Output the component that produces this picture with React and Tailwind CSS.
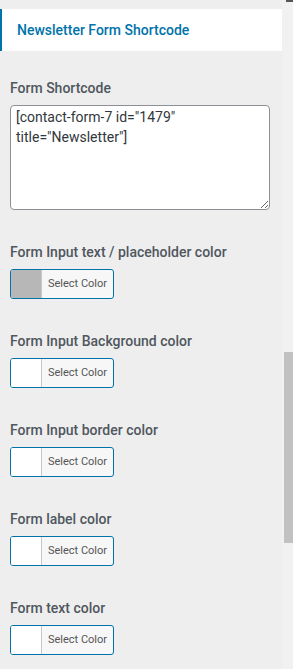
import React from 'react';

const colorFields = [
  { label: 'Form Input text / placeholder color', swatch: 'bg-[#b7b7b7]' },
  { label: 'Form Input Background color', swatch: 'bg-white' },
  { label: 'Form Input border color', swatch: 'bg-white' },
  { label: 'Form label color', swatch: 'bg-white' },
  { label: 'Form text color', swatch: 'bg-white' },
];

function ColorButton({ swatch }) {
  return (
    <button className="flex h-[30px] w-[104px] overflow-hidden rounded-[3px] border border-[#0073aa] bg-[#f7f7f7] p-0">
      <span className={`h-full w-[31px] shrink-0 border-r border-[#c7c7c7] ${swatch}`} />
      <span className="flex flex-1 items-center justify-center text-[11px] text-[#555555]">Select Color</span>
    </button>
  );
}

export default function App() {
  return (
    <div className="flex h-[669px] w-[293px] overflow-hidden bg-[#eeeeee] font-['Roboto',sans-serif]">
      <div className="w-[282px] shrink-0 pt-[9px]">
        <div className="flex h-[42px] items-center border-l-2 border-[#0073aa] bg-white pl-[15px] text-[14px] font-medium text-[#0073aa]">
          Newsletter Form Shortcode
        </div>

        <div className="px-[10px] pt-[27px]">
          <div className="mb-[7px] text-[14px] leading-[20px] font-medium text-[#50575e]">Form Shortcode</div>
          <textarea
            readOnly
            defaultValue={'[contact-form-7 id="1479" title="Newsletter"]'}
            className="block h-[105px] w-[260px] resize-y rounded-[4px] border border-[#8c8f94] bg-white px-[5px] py-[1px] text-[14px] leading-[20px] text-[#32373c] outline-none"
          />

          {colorFields.map((f) => (
            <div key={f.label} className="pt-[32px]">
              <div className="mb-[7px] text-[14px] leading-[20px] font-medium text-[#50575e]">{f.label}</div>
              <ColorButton swatch={f.swatch} />
            </div>
          ))}
        </div>
      </div>

      <div className="relative w-[11px] shrink-0 bg-[#f1f1f1]">
        <div className="absolute right-0 top-0 h-[2px] w-[7px] bg-[#555555]" />
        <div className="ml-[2px] mt-[352px] h-[191px] w-[9px] bg-[#c1c1c1]" />
      </div>
    </div>
  );
}
